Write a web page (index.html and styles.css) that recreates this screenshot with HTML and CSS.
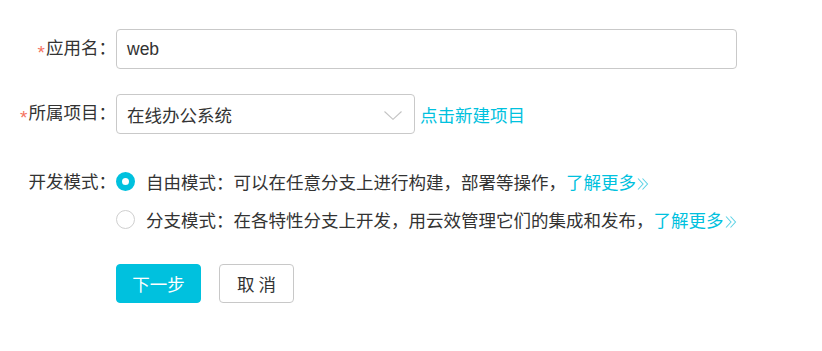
FILE: index.html
```html
<!DOCTYPE html>
<html lang="zh-CN">
<head>
<meta charset="utf-8">
<title>创建应用</title>
<link rel="stylesheet" href="styles.css">
</head>
<body>
<form class="form">
  <div class="row row-name">
    <label class="label"><span class="req">*</span>应用名：</label>
    <div class="input input-wide">web</div>
  </div>
  <div class="row row-project">
    <label class="label"><span class="req">*</span>所属项目：</label>
    <div class="input select">
      <span>在线办公系统</span>
      <svg class="chev" width="18" height="9" viewBox="0 0 18 9"><path d="M0.5 0.5 L9 8.3 L17.5 0.5" fill="none" stroke="#c3c3c3" stroke-width="1.1"/></svg>
    </div>
    <a class="link new-link">点击新建项目</a>
  </div>
  <div class="row row-mode">
    <label class="label label-top">开发模式：</label>
    <div class="radios">
      <div class="radio-line"><span class="radio checked"></span><span>自由模式：可以在任意分支上进行构建，部署等操作，<a class="link">了解更多<svg class="more" width="12" height="12" viewBox="0 0 12 12"><path d="M1 0.5 L6 6 L1 11.5 M5.5 0.5 L10.5 6 L5.5 11.5" fill="none" stroke="#5fd3e6" stroke-width="1.1"/></svg></a></span></div>
      <div class="radio-line"><span class="radio"></span><span>分支模式：在各特性分支上开发，用云效管理它们的集成和发布，<a class="link">了解更多<svg class="more" width="12" height="12" viewBox="0 0 12 12"><path d="M1 0.5 L6 6 L1 11.5 M5.5 0.5 L10.5 6 L5.5 11.5" fill="none" stroke="#5fd3e6" stroke-width="1.1"/></svg></a></span></div>
    </div>
  </div>
  <div class="row row-actions">
    <div class="label"></div>
    <button type="button" class="btn btn-primary">下一步</button>
    <button type="button" class="btn btn-default">取 消</button>
  </div>
</form>
</body>
</html>
```
FILE: styles.css
```css
html, body {
  margin: 0;
  padding: 0;
  background: #fff;
}
body {
  font-family: "Noto Sans CJK SC", "Noto Sans", sans-serif;
  font-size: 17.5px;
  color: #333;
}
.form {
  padding-top: 29px;
}
.row {
  display: flex;
  align-items: center;
}
.label {
  width: 116px;
  flex-shrink: 0;
  text-align: right;
  white-space: nowrap;
}
.req {
  font-family: "Liberation Sans", sans-serif;
  color: #f5735f;
  font-size: 19px;
  margin-right: 1px;
  vertical-align: -5px;
}
.input {
  box-sizing: border-box;
  height: 40px;
  border: 1px solid #c9c9c9;
  border-radius: 4px;
  padding: 0 10px;
  display: flex;
  align-items: center;
  background: #fff;
}
.input-wide {
  width: 621px;
  font-family: "Liberation Sans", "Noto Sans CJK SC", sans-serif;
}
.row-project {
  margin-top: 25px;
}
.select {
  width: 299px;
  justify-content: space-between;
  padding-right: 12px;
}
.chev {
  display: block;
  margin-top: 2px;
}
.link {
  color: #00c1de;
  text-decoration: none;
  cursor: pointer;
}
.new-link {
  margin-left: 5px;
}
.row-mode {
  margin-top: 28px;
  align-items: flex-start;
}
.label-top {
  line-height: 38px;
}
.radios {
  display: flex;
  flex-direction: column;
}
.radio-line {
  height: 38px;
  display: flex;
  align-items: center;
  white-space: nowrap;
}
.radio {
  box-sizing: border-box;
  width: 19px;
  height: 19px;
  border-radius: 50%;
  border: 1px solid #cfcfcf;
  margin-right: 11px;
  flex-shrink: 0;
  background: #fff;
}
.radio.checked {
  border: 6px solid #00c1de;
}
.more {
  margin-left: 1px;
  vertical-align: -1px;
}
.row-actions {
  margin-top: 26px;
}
.btn {
  box-sizing: border-box;
  height: 39px;
  border-radius: 4px;
  font-family: "Noto Sans CJK SC", sans-serif;
  font-size: 17.5px;
  padding: 0;
  cursor: pointer;
}
.btn-primary {
  width: 85px;
  background: #00c1de;
  border: 1px solid #00c1de;
  color: #fff;
}
.btn-default {
  width: 75px;
  margin-left: 18px;
  background: #fff;
  border: 1px solid #c8c8c8;
  color: #333;
}
```
